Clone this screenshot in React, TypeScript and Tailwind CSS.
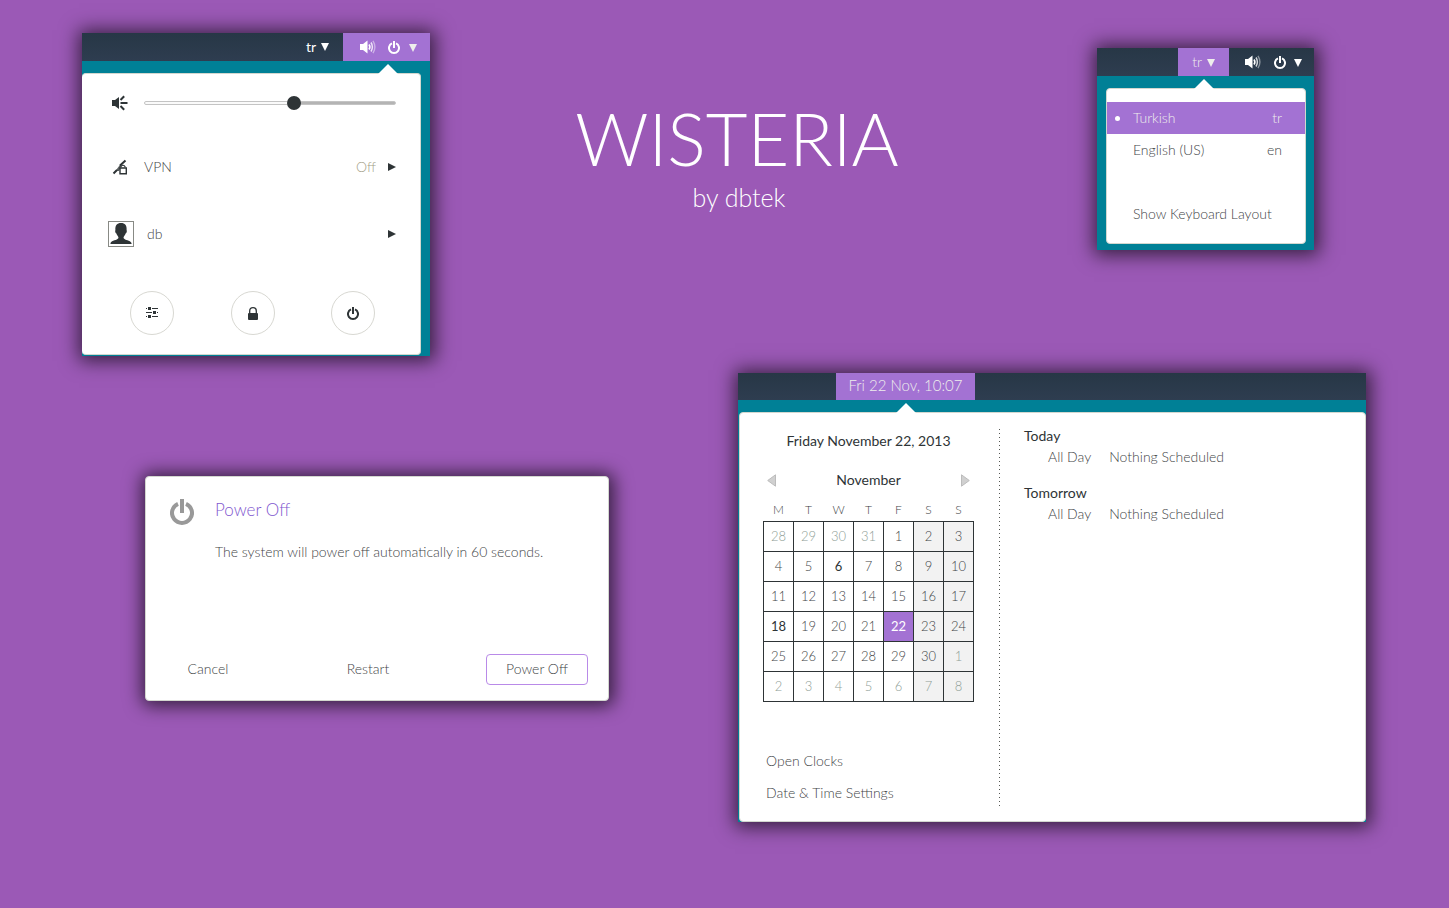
import { useState } from "react";
import type { CSSProperties, ReactNode } from "react";

const panelShadow = "shadow-[1px_1px_18px_4px_rgba(0,0,0,0.65)]";

function PowerIcon({ className }: { className: string }) {
  return (
    <svg viewBox="0 0 24 26" className={className} fill="none" stroke="currentColor" strokeWidth="4" aria-hidden="true">
      <path d="M8 4.8 A10 10 0 1 0 16 4.8" />
      <path d="M12 0 V14" />
    </svg>
  );
}

function VolumeIcon() {
  return (
    <svg viewBox="0 0 16 14" className="h-[14px] w-[16px]" fill="none" aria-hidden="true">
      <path d="M0 4 H3 L7.5 0.5 V13.5 L3 10 H0 Z" fill="currentColor" />
      <path d="M9 4.5 Q10.8 7 9 9.5" stroke="currentColor" strokeWidth="1.6" />
      <path d="M11 2.5 Q13.8 7 11 11.5" stroke="currentColor" strokeWidth="1.5" opacity=".8" />
      <path d="M13 0.8 Q16.8 7 13 13.2" stroke="currentColor" strokeWidth="1.4" opacity=".45" />
    </svg>
  );
}

function SpeakerIcon() {
  return (
    <svg viewBox="0 0 16 16" className="h-[16px] w-[16px]" fill="none" aria-hidden="true">
      <path d="M0 5 H3 L7 2 V14 L3 11 H0 Z" fill="currentColor" />
      <path d="M8.5 8 H15.5 M8.5 5 L12.2 1.2 M8.5 11 L12.2 14.8" stroke="currentColor" strokeWidth="2" />
    </svg>
  );
}

function VpnIcon() {
  return (
    <svg viewBox="0 0 16 16" className="h-[16px] w-[16px]" fill="none" aria-hidden="true">
      <path d="M1.5 14.5 L5 11 M8 6.5 L13.5 1.5" stroke="currentColor" strokeWidth="2" />
      <path d="M3.5 12 L8.5 5 L9.5 6.5 L7 12 Z" fill="currentColor" opacity=".8" />
      <path d="M9 8.5 V7.5 Q11 5 13 7.5 V8.5" stroke="currentColor" strokeWidth="1.2" />
      <path d="M8 9 H14.3 V14.8 H8 Z" fill="white" stroke="currentColor" strokeWidth="1.4" />
    </svg>
  );
}

function DownArrow() {
  return (
    <svg viewBox="0 0 8 9" className="h-[9px] w-[8px]" fill="currentColor" aria-hidden="true">
      <path d="M0 1 H8 L4 9 Z" />
    </svg>
  );
}

function MonthArrow({ dir }: { dir: "left" | "right" }) {
  return (
    <svg viewBox="0 0 9 13" className="h-[13px] w-[9px]" fill="#d0d0d0" stroke="#bcbcbc" strokeWidth="1" aria-hidden="true">
      <path d={dir === "left" ? "M8.5 .8 V12.2 L.7 6.5 Z" : "M.5 .8 V12.2 L8.3 6.5 Z"} />
    </svg>
  );
}

function SmallArrow() {
  return (
    <svg viewBox="0 0 8 8" className="h-2 w-2" fill="#2e3436" aria-hidden="true">
      <path d="M0 0 L8 4 L0 8 Z" />
    </svg>
  );
}

function Pointer({ className }: { className: string }) {
  return (
    <svg viewBox="0 0 20 10" className={`absolute -top-[10px] h-[10px] w-[20px] ${className}`} aria-hidden="true">
      <path d="M0 10 L10 0 L20 10 Z" fill="white" />
    </svg>
  );
}

function TopBar({ children }: { children: ReactNode }) {
  return <header className="flex h-7 bg-linear-to-b from-[#273746] to-[#2e3d50] text-sm text-white">{children}</header>;
}

function SystemMenu() {
  const [volume, setVolume] = useState(60);
  return (
    <section className={`bg-[#008096] ${panelShadow}`}>
      <TopBar>
        <button className="ml-auto flex items-center gap-[5px] px-[14px] pb-px font-normal">tr <DownArrow /></button>
        <button aria-label="System menu" className="flex items-center bg-[#a372d3] pr-[13px] pl-[17px]">
          <VolumeIcon />
          <PowerIcon className="ml-3 h-[13px] w-3" />
          <span className="ml-[9px] text-[#eeeeec]"><DownArrow /></span>
        </button>
      </TopBar>
      <div className="relative mt-3 mr-[9px] mb-px rounded-[4px] border border-l-0 border-[#d3d7cf] bg-white pr-6 pl-[26px] text-[#2e3436]">
        <Pointer className="right-[22px]" />
        <div className="flex items-center pt-[21px] pl-1">
          <SpeakerIcon />
          <input
            type="range"
            aria-label="Volume"
            value={volume}
            onChange={(e) => setVolume(Number(e.target.value))}
            style={{ "--level": `${volume}%` } as CSSProperties}
            className="ml-4 h-4 min-w-0 flex-1 appearance-none bg-transparent [&::-webkit-slider-runnable-track]:h-1 [&::-webkit-slider-runnable-track]:rounded-full [&::-webkit-slider-runnable-track]:border [&::-webkit-slider-runnable-track]:border-[#c4c4c4] [&::-webkit-slider-runnable-track]:bg-[linear-gradient(to_right,#fafafa_var(--level),#b4b4b4_var(--level))] [&::-webkit-slider-thumb]:-mt-[6px] [&::-webkit-slider-thumb]:size-[14px] [&::-webkit-slider-thumb]:appearance-none [&::-webkit-slider-thumb]:rounded-full [&::-webkit-slider-thumb]:bg-[#2e3436]"
          />
        </div>
        <button className="mt-[46px] flex h-5 w-full items-center pl-1 text-sm text-[#3f4547]">
          <span className="text-[#2e3436]"><VpnIcon /></span>
          <span className="ml-4">VPN</span>
          <span className="ml-auto mr-3 text-[#a59f88]">Off</span>
          <SmallArrow />
        </button>
        <button className="mt-[44px] flex h-[26px] w-full items-center text-sm text-[#3f4547]">
          <svg viewBox="0 0 26 26" className="h-[26px] w-[26px]" aria-hidden="true">
            <rect x=".5" y=".5" width="25" height="25" fill="white" stroke="#888a85" />
            <path d="M13 2 C17 2 19 4.5 18.6 9 C19.2 10 18.6 12 17.6 12.6 C17.2 14.5 15.5 15.5 15.5 17 C17 19.5 22 19 23.5 22 V23 H2.5 V22 C4 19 9 19.5 10.5 17 C10.5 15.5 8.8 14.5 8.4 12.6 C7.4 12 6.8 10 7.4 9 C7 4.5 9 2 13 2 Z" fill="#2e3436" />
          </svg>
          <span className="ml-[13px]">db</span>
          <span className="ml-auto"><SmallArrow /></span>
        </button>
        <div className="mt-[44px] flex justify-between pr-[21px] pb-[19px] pl-[22px]">
          <button aria-label="Settings" className="flex size-11 items-center justify-center rounded-full border border-[#d8d8d2]">
            <svg viewBox="0 0 12 12" className="size-3" fill="#2e3436" aria-hidden="true">
              <path d="M0 1h1v1H0z M2 0h3v3H2z M6 1h6v1H6z M0 5h6v1H0z M7 4h3v3H7z M11 5h1v1h-1z M0 9h1v1H0z M2 8h3v3H2z M6 9h6v1H6z" />
            </svg>
          </button>
          <button aria-label="Lock" className="flex size-11 items-center justify-center rounded-full border border-[#d8d8d2]">
            <svg viewBox="0 0 10 13" className="h-[13px] w-[10px]" aria-hidden="true">
              <rect y="6" width="10" height="7" rx="1" fill="#2e3436" />
              <path d="M1.7 7 V4 Q1.7 .7 5 .7 Q8.3 .7 8.3 4 V7" fill="none" stroke="#2e3436" strokeWidth="1.3" />
            </svg>
          </button>
          <button aria-label="Power" className="flex size-11 items-center justify-center rounded-full border border-[#d8d8d2]">
            <PowerIcon className="h-[13px] w-3" />
          </button>
        </div>
      </div>
    </section>
  );
}

function KeyboardMenu() {
  return (
    <section className={`mt-[15px] bg-[#008096] pb-[6px] ${panelShadow}`}>
      <TopBar>
        <button className="ml-auto flex items-center gap-[5px] bg-[#a372d3] px-[14px] text-[#eeeeec]">tr <DownArrow /></button>
        <button aria-label="System menu" className="flex items-center pr-3 pl-4">
          <VolumeIcon />
          <PowerIcon className="ml-[13px] h-[13px] w-3" />
          <span className="ml-2"><DownArrow /></span>
        </button>
      </TopBar>
      <div className="relative mt-3 mr-2 ml-[9px] rounded-[4px] border border-[#d3d7cf] bg-white py-[13px] text-sm text-[#3f4547]">
        <Pointer className="left-[87px]" />
        <button className="flex h-8 w-full items-center bg-[#a372d3] pr-[23px] pl-2 text-[#eeeeec]">
          <span className="size-[5px] rounded-full bg-white" />
          <span className="ml-[13px]">Turkish</span>
          <span className="ml-auto">tr</span>
        </button>
        <button className="flex h-8 w-full items-center justify-between pr-[23px] pl-[26px]">
          <span>English (US)</span>
          <span>en</span>
        </button>
        <button className="mt-8 flex h-8 w-full items-center pl-[26px] whitespace-nowrap">Show Keyboard Layout</button>
      </div>
    </section>
  );
}

function PowerDialog() {
  return (
    <section className={`mt-[103px] flex min-h-[225px] flex-col rounded-[4px] border border-[#d3d7cf] bg-white px-5 pb-[15px] text-sm text-[#3f4547] ${panelShadow}`}>
      <div className="flex pt-[22px] pl-1">
        <span className="text-[#999999]"><PowerIcon className="h-[26px] w-6" /></span>
        <div className="ml-[21px]">
          <h2 className="text-[17px] leading-[22px] text-[#7f58cf]">Power Off</h2>
          <p className="mt-[21px] leading-5">The system will power off automatically in 60 seconds.</p>
        </div>
      </div>
      <div className="mt-auto flex justify-between">
        <button className="h-[31px] w-[84px] pb-px">Cancel</button>
        <button className="h-[31px] w-[102px] pb-px">Restart</button>
        <button className="h-[31px] w-[102px] rounded-[4px] border border-[#b98ae8] pb-px">Power Off</button>
      </div>
    </section>
  );
}

const weekdays = ["M", "T", "W", "T", "F", "S", "S"];

const weeks = [
  [28, 29, 30, 31, 1, 2, 3],
  [4, 5, 6, 7, 8, 9, 10],
  [11, 12, 13, 14, 15, 16, 17],
  [18, 19, 20, 21, 22, 23, 24],
  [25, 26, 27, 28, 29, 30, 1],
  [2, 3, 4, 5, 6, 7, 8],
];

function dayClass(week: number, col: number, day: number) {
  const outside = (week === 0 && day > 20) || (week > 3 && day < 10);
  if (week === 3 && day === 22) return "bg-[#a372d3] text-white font-normal";
  if ((week === 1 && day === 6) || (week === 3 && day === 18)) return "text-[#2e3436] font-normal";
  const tone = outside ? "text-[#8fa097]" : "text-[#3f4547]";
  return col > 4 ? `bg-[#f2f2f2] ${tone}` : tone;
}

function Agenda({ title }: { title: string }) {
  return (
    <div className="mb-4 leading-5">
      <h3 className="font-normal text-[#2e3436]">{title}</h3>
      <p className="mt-px flex gap-[18px] pl-6">
        <span>All Day</span>
        <span>Nothing Scheduled</span>
      </p>
    </div>
  );
}

function CalendarMenu() {
  return (
    <section className={`bg-[#008096] ${panelShadow}`}>
      <header className="flex h-[27px] bg-linear-to-b from-[#273746] to-[#2e3d50] pl-[98px] text-[15px]">
        <button className="w-[139px] bg-[#a372d3] pb-[2px] text-[#eeeeec]">Fri 22 Nov, 10:07</button>
      </header>
      <div className="relative mt-3 ml-px flex rounded-[4px] border border-[#d3d7cf] bg-white text-sm text-[#3f4547]">
        <Pointer className="left-[156px]" />
        <div className="mt-4 mb-3 flex">
          <div className="w-[259px] pl-[23px]">
            <div className="w-[211px]">
              <h2 className="mt-[2px] text-center leading-5 font-normal text-[#2e3436]">Friday November 22, 2013</h2>
              <div className="mt-[19px] flex h-5 items-center justify-between px-1">
                <button aria-label="Previous month"><MonthArrow dir="left" /></button>
                <span className="font-normal text-[#2e3436]">November</span>
                <button aria-label="Next month"><MonthArrow dir="right" /></button>
              </div>
              <table className="mt-[10px] w-full table-fixed border-collapse text-center text-[13px] leading-5">
                <thead>
                  <tr>
                    {weekdays.map((d, i) => (
                      <th key={i} className="h-[21px] p-0 text-xs font-light">{d}</th>
                    ))}
                  </tr>
                </thead>
                <tbody>
                  {weeks.map((week, w) => (
                    <tr key={w}>
                      {week.map((day, c) => (
                        <td key={c} className={`h-[30px] border border-[#2e3436] p-0 pb-px ${dayClass(w, c, day)}`}>{day}</td>
                      ))}
                    </tr>
                  ))}
                </tbody>
              </table>
            </div>
            <div className="mt-[43px] flex flex-col items-start pl-[3px]">
              <button className="h-8">Open Clocks</button>
              <button className="h-8">Date &amp; Time Settings</button>
            </div>
          </div>
          <div className="mb-[3px] w-px bg-[repeating-linear-gradient(to_bottom,#555753_0px,#555753_1px,transparent_1px,transparent_4px)]" />
        </div>
        <div className="pt-[13px] pl-6">
          <Agenda title="Today" />
          <Agenda title="Tomorrow" />
        </div>
      </div>
    </section>
  );
}

export default function App() {
  return (
    <main className="min-h-screen bg-[#9b59b6] pt-[33px] pb-10 font-['Lato','Open_Sans',sans-serif] font-light">
      <div className="grid grid-cols-[348fr_667fr_217fr] items-start pr-[135px] pl-[82px]">
        <SystemMenu />
        <div className="pt-[62px] pr-[53px] text-center text-white">
          <h1 className="text-[72px] leading-[86px]">WISTERIA</h1>
          <p className="pl-1 text-[25px] leading-8">by dbtek</p>
        </div>
        <KeyboardMenu />
      </div>
      <div className="mt-[17px] grid grid-cols-[464fr_628fr] items-start gap-[129px] pr-[83px] pl-[145px]">
        <PowerDialog />
        <CalendarMenu />
      </div>
    </main>
  );
}
